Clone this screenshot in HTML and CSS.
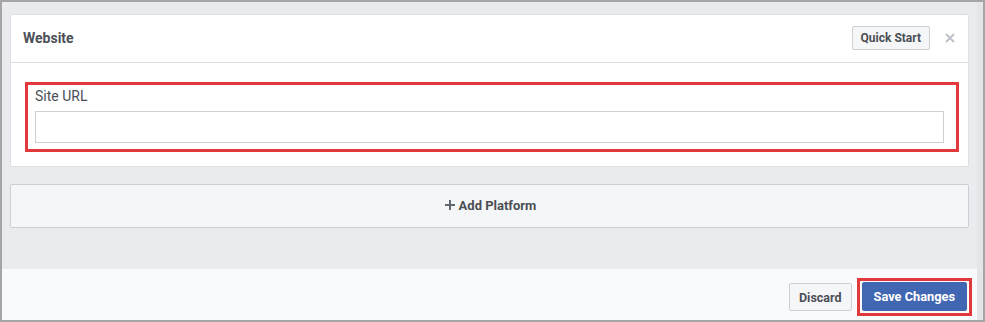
FILE: index.html
```html
<!DOCTYPE html>
<html>
<head>
<meta charset="utf-8">
<link rel="stylesheet" href="styles.css">
</head>
<body>
<div class="frame">
  <div class="main">
    <div class="content">
      <div class="card">
        <div class="card-header">
          <div class="card-title">Website</div>
          <div class="header-actions">
            <button class="btn btn-quick">Quick Start</button>
            <svg class="close-icon" width="10" height="10" viewBox="0 0 10 10"><path d="M1 1 L9 9 M9 1 L1 9" stroke="#bec2c9" stroke-width="2" fill="none"/></svg>
          </div>
        </div>
        <div class="card-body">
          <div class="highlight field">
            <label class="field-label">Site URL</label>
            <input class="field-input" type="text">
          </div>
        </div>
      </div>
      <div class="add-platform">
        <svg class="plus-icon" width="10" height="10" viewBox="0 0 10 10"><path d="M5 0 V10 M0 5 H10" stroke="#606770" stroke-width="2" fill="none"/></svg>
        <span>Add Platform</span>
      </div>
    </div>
    <div class="footer">
      <button class="btn btn-discard">Discard</button>
      <div class="highlight save-wrap">
        <button class="btn btn-save">Save Changes</button>
      </div>
    </div>
  </div>
  <div class="strip"></div>
</div>
</body>
</html>
```

FILE: styles.css
```css
* { box-sizing: border-box; }
html, body { margin: 0; padding: 0; }
body {
  font-family: Roboto, "Liberation Sans", Arial, sans-serif;
  color: #4b4f56;
  background: #ffffff;
}
.frame {
  width: 985px;
  height: 322px;
  border: 2px solid #a5a5a5;
  display: flex;
  background: #e9ebee;
}
.main {
  flex: 1;
  display: flex;
  flex-direction: column;
}
.strip {
  width: 6px;
  background: #e4e5e7;
}
.content {
  flex: 1;
  padding: 12px 8px 0 8px;
}
.card {
  background: #ffffff;
  border: 1px solid #dddfe2;
  border-radius: 2px;
}
.card-header {
  height: 48px;
  border-bottom: 1px solid #dddfe2;
  display: flex;
  align-items: center;
  justify-content: space-between;
  padding: 0 13px 2px 12px;
}
.card-title {
  font-size: 14px;
  font-weight: 700;
  color: #4b4f56;
}
.header-actions {
  display: flex;
  align-items: center;
  gap: 15px;
  margin-top: 1px;
}
.close-icon { display: block; }
.btn {
  font-family: Roboto, "Liberation Sans", Arial, sans-serif;
  font-size: 12px;
  font-weight: 700;
  border-radius: 2px;
  cursor: pointer;
  padding: 0 8px;
}
.btn-quick {
  height: 24px;
  background: #f5f6f7;
  border: 1px solid #ced0d4;
  color: #4b4f56;
  padding: 0 8px;
}
.card-body {
  padding: 19px 9px 14px 14px;
}
.highlight {
  border: 3px solid #e2393d;
}
.field {
  display: flex;
  flex-direction: column;
  padding: 2px 12px 6px 7px;
}
.field-label {
  font-size: 14px;
  line-height: 18px;
  color: #4b4f56;
  margin-bottom: 6px;
}
.field-input {
  height: 32px;
  border: 1px solid #ccd0d5;
  border-radius: 0;
  background: #fff;
  outline: none;
  margin: 0;
}
.add-platform {
  margin-top: 17px;
  height: 44px;
  background: #f5f6f7;
  border: 1px solid #ccd0d5;
  border-radius: 2px;
  display: flex;
  align-items: center;
  justify-content: center;
  gap: 4px;
  font-size: 13px;
  font-weight: 700;
  color: #4b4f56;
  padding: 0 0 2px 2px;
}
.plus-icon { display: block; }
.footer {
  height: 51px;
  background: #f9fafb;
  display: flex;
  align-items: center;
  justify-content: flex-end;
  gap: 5px;
  padding: 9px 5px 4px 0;
}
.btn-discard {
  height: 28px;
  background: #f5f6f7;
  border: 1px solid #ced0d4;
  color: #4b4f56;
  padding: 0 9px;
  font-size: 12.5px;
}
.save-wrap {
  padding: 1px 2px 2px 2px;
}
.btn-save {
  display: block;
  height: 29px;
  background: #4267b2;
  border: 1px solid #4267b2;
  color: #ffffff;
  padding: 0 11px;
  font-size: 12.8px;
}
```
